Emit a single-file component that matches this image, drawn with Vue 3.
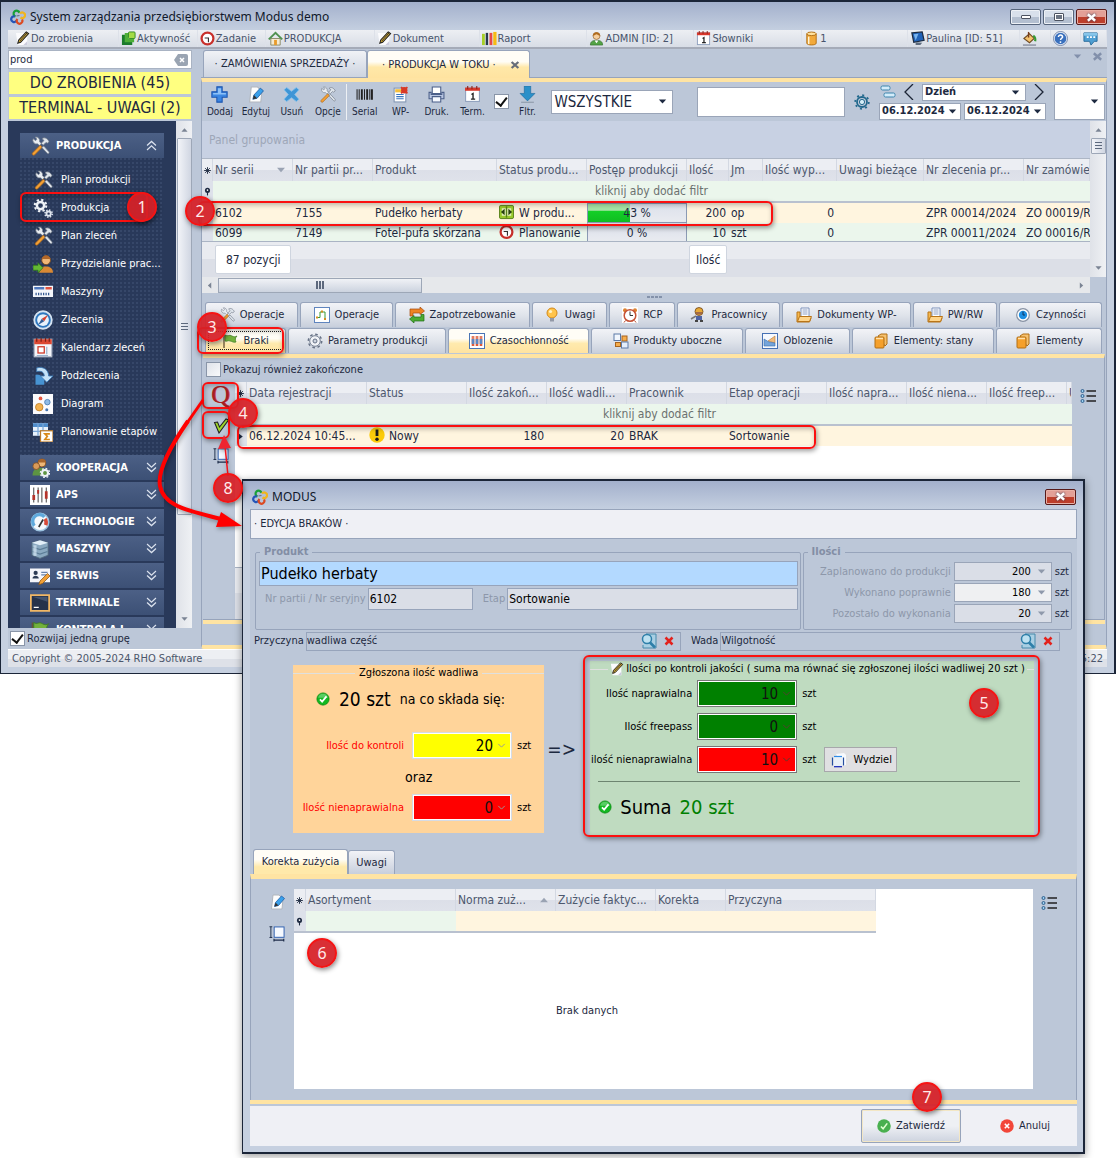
<script setup>
const tools = '<path d="M2.5 2.2a3 3 0 0 0 3.6 4l1.4 1.4 1.6-1.6-1.5-1.4A3 3 0 0 0 4.300.8l1.2 1.700-1 1.200z" fill="#e9edf2" stroke="#7d8794" stroke-width=".6"/><path d="M2 13.500 8.200 7.300l1.600 1.600-6.200 6.200c-1 .8-2.500-.6-1.600-1.600z" fill="#f3a034" stroke="#a8641a" stroke-width=".6"/><path d="M9 5.800 11.200 3.600 9.600 2.100C11.500.7 14 1.800 15.300 4.600l-1.500 1.200-1-.7-2.200 2.200z" fill="#dfe5ec" stroke="#6d7683" stroke-width=".6"/><path d="M9.400 9.200l4.300 4.600c.8 1 2.200-.2 1.400-1.300L11 8z" fill="#dfe5ec" stroke="#6d7683" stroke-width=".6"/>'
const check = '<circle cx="8" cy="8" r="7" fill="#12b821" stroke="#07850f" stroke-width=".8"/><path d="M2.500 6.500a5.600 5.600 0 0 1 11 0z" fill="#fff" opacity=".3"/><path d="M4.500 8.500 7 11l5-6" fill="none" stroke="#fff" stroke-width="2"/>'
const icons = {
  logo: '<g fill="none" stroke-width="2.200"><path d="M5.500 7.500a3 3 0 1 1 4-3.500" stroke="#18a038"/><path d="M10 4.500a2.800 2.800 0 1 1 .5 4" stroke="#f0b51e"/><path d="M5 7.500a2.800 2.800 0 1 0 1.500 4" stroke="#2455b8"/><path d="M7.500 10a2.800 2.800 0 1 0 4.500.5" stroke="#dc4a22"/><path d="M6.500 7 9.500 6.500" stroke="#66707f" stroke-width="1.200"/></g>',
  pencil: '<path d="M1 2h12v13H3z" fill="#fbfbfd"/><path d="M9 15l4-4v4z" fill="#ccd"/><path d="M3 13l1-3.500L12 1l2.500 1.800L6 12z" fill="#f2c33a" stroke="#1c1c1c" stroke-width="1.100"/><path d="M4.800 11 13 2" stroke="#1c1c1c" stroke-width="1"/>',
  green3: '<path d="M1 4h4v7h7v4H1z" fill="#1b7b2c"/><path d="M4 2h4v6h6v4H4z" fill="#4daf38"/><rect x="8" y="1" width="7" height="7" rx="1" fill="#a4db46" stroke="#348b25"/>',
  clock: '<circle cx="8" cy="8" r="6.300" fill="#fff" stroke="#c8302b" stroke-width="2.400"/><path d="M5 7.500h4V12" fill="none" stroke="#333" stroke-width="1.200"/>',
  home: '<path d="M3 8h10v7H3z" fill="#f4ead1" stroke="#8a8a6a"/><path d="M.8 9 8 2l7.200 7" fill="none" stroke="#4f9150" stroke-width="2"/><path d="M6.500 9.500h3V15h-3z" fill="#e89b2a"/>',
  chart: '<rect x="0" y="3" width="3" height="12" fill="#a6cf27"/><rect x="4" y="2" width="2.500" height="13" fill="#263a4d"/><rect x="8" y="2" width="3" height="13" fill="#e64848"/><rect x="12" y="1" width="3.500" height="14" fill="#f6bb13"/>',
  user: '<path d="M1.500 15c0-4 2.500-5 6.500-5s6.500 1 6.500 5z" fill="#53a345" stroke="#2f6d28" stroke-width=".7"/><path d="m6 10 2 3 2-3z" fill="#fff"/><circle cx="8" cy="5.300" r="3.700" fill="#f6cf9e" stroke="#8c5a24" stroke-width=".7"/><path d="M4 5c0-5 8-5 8 0-2 0-3-1.500-4-1.500S6 5 4 5z" fill="#b06c1f"/>',
  cal1: '<rect x="1.500" y="2" width="13" height="12.500" fill="#fff" stroke="#8fa0bd"/><path d="M1 1.500h14v3H1z" fill="#d8372b"/><path d="M3.500 0v3M7.500 0v3M12 0v3" stroke="#8b2018"/><path d="M7 8l1.500-1v5M6.500 12.300h4" stroke="#222" fill="none" stroke-width="1.300"/>',
  db: '<path d="M3 3v10c0 2.500 10 2.500 10 0V3z" fill="#f2a93a" stroke="#b06d13"/><ellipse cx="8" cy="3" rx="5" ry="1.900" fill="#ffe2a0" stroke="#b06d13"/><path d="M5 6v8" stroke="#fff4d4" stroke-width="1.600"/>',
  monitor: '<path d="M2 2l11-1 2 9-11 2z" fill="#2163b8" stroke="#1c2b40" stroke-width="1.300"/><path d="M4 3.500 9 3 6 10z" fill="#79b5ef"/><path d="M6 12l7 .5L11 15H6z" fill="#5d6b7d"/>',
  bucket: '<path d="m2 8 6-5 5 5-5 4.500z" fill="#f5c26d" stroke="#6f4b24" stroke-width="1.100"/><path d="M7 1v6" stroke="#753b1c" stroke-width="1.500"/><path d="M12 5c2 1 2.500 4 2 6" stroke="#379b34" stroke-width="2.400" fill="none"/><path d="M1 15h14" stroke="#8a8fa0" stroke-width="1.500"/>',
  help: '<circle cx="8" cy="8" r="6.800" fill="#3a70bd" stroke="#e5edf8" stroke-width="1.200"/><circle cx="8" cy="8" r="7.500" fill="none" stroke="#5d7199" stroke-width=".8"/><path d="M5.800 6.500c0-3 4.700-2.800 4.400 0-.2 1.200-2.100 1.400-2.100 3" fill="none" stroke="#fff" stroke-width="1.600"/><circle cx="8" cy="11.800" r="1" fill="#fff"/>',
  chat: '<path d="M1 2h14v9h-3l-3.500 4L7 11H1z" fill="#4f9fd3" stroke="#286b9b"/><path d="M1 2h14v3H1z" fill="#87c5ea"/><path d="M4 6.500h2M7.500 6.500h2M11 6.500h2" stroke="#fff" stroke-width="1.800"/>',
  plus: '<path d="M5.500.8h5v4.700h4.700v5h-4.700v4.700h-5v-4.700H.8v-5h4.700z" fill="#3b86e2" stroke="#1e57b0"/><path d="M6.500 2h3v4.500H14V8H2V6.500h4.500z" fill="#8dc1f7"/>',
  edit: '<path d="M4 1h6l4 4-1 10H2.500z" fill="#fdfdfd" stroke="#b1b6bd"/><path d="m5.500 12.500 1-4 6-6.500L15.500 4.500l-6 7z" fill="#3aa0ea" stroke="#1e5ea8" stroke-width=".8"/><path d="m5.500 12.500 1-4L9.500 11.500z" fill="#333"/>',
  del: '<path d="M1 3.500 3.500 1.500 8 5l4.500-3.500L15 3.500 11 8l4 4.500-2.500 2L8 11l-4.500 3.500L1 12.500 5 8z" fill="#3e95d6" stroke="#83c2ec" stroke-width=".8"/>',
  tools,
  barcode: '<path d="M1 3v10M3 3v10M8 3v10M13 3v10" stroke="#222" stroke-width="1"/><path d="M5.500 3v10M10.500 3v10M15 3v10" stroke="#222" stroke-width="1.800"/>',
  wp: '<rect x="2" y="2" width="11" height="13" fill="#fff" stroke="#8396b3"/><path d="M3 3h6v3H3z" fill="#f5be3b"/><path d="M4 8h7M4 10h7M4 12h7" stroke="#3976c0"/><circle cx="11.500" cy="4" r="3" fill="#d83a26"/><path d="M8.500 1l6 6m0-6-6 6" stroke="#d83a26" stroke-width="1.600"/>',
  print: '<path d="M4 1h8v6H4z" fill="#fff" stroke="#4b5f89"/><path d="M1 6h2v2h10V6h2v6H1z" fill="#b8c5e2" stroke="#4b5f89"/><path d="M4 10h8v5H4z" fill="#f5f8ff" stroke="#4b5f89"/>',
  down: '<path d="M5 0h6v7h4l-7 7-7-7h4z" fill="#2a90c9" stroke="#1b6a9e" stroke-width=".6"/><path d="M2 15.300h12" stroke="#8c98a8"/>',
  gear: '<circle cx="8" cy="8" r="5" fill="none" stroke="#23698d" stroke-width="1.800"/><circle cx="8" cy="8" r="2.600" fill="#d5eef8" stroke="#23698d"/><circle cx="8" cy="8" r="6.800" fill="none" stroke="#23698d" stroke-width="1.800" stroke-dasharray="2 3.340"/>',
  bars: '<rect x="1" y="2" width="9" height="4" rx="1.500" fill="#d4ecfa" stroke="#3d85ad"/><rect x="4" y="9" width="11" height="4" rx="1.500" fill="#d4ecfa" stroke="#3d85ad"/>',
  gears: '<circle cx="6" cy="6" r="2.900" fill="none" stroke="#eef2f7" stroke-width="2"/><circle cx="6" cy="6" r="4.600" fill="none" stroke="#eef2f7" stroke-width="1.700" stroke-dasharray="1.800 1.810"/><circle cx="12.500" cy="12.500" r="1.700" fill="none" stroke="#dfe5ee" stroke-width="1.500"/><circle cx="12.500" cy="12.500" r="2.900" fill="none" stroke="#dfe5ee" stroke-width="1.200" stroke-dasharray="1.200 1.070"/>',
  worker: '<path d="M5 15c0-4 2-5 5.500-5S16 12 16 15z" fill="#d98934"/><circle cx="10.500" cy="5" r="3.500" fill="#f0b777" stroke="#7a481c" stroke-width=".7"/><path d="M7 4c1-4 6-4 7 0z" fill="#b2682a"/><path d="M0 9h4V7l4 4-4 4v-2H0z" fill="#64b834" stroke="#2b721b" stroke-width=".6"/>',
  machine: '<rect y="3" width="16" height="9" fill="#f4f6fa"/><path d="M1 5h8" stroke="#4f78bd" stroke-width="2"/><path d="M10 5h5" stroke="#e0533f" stroke-width="2"/><path d="M2 9.500h12" stroke="#33578f" stroke-width="2" stroke-dasharray="1 1"/>',
  compass: '<circle cx="8" cy="8" r="7" fill="#2f78bf" stroke="#d6e4f2" stroke-width="1.500"/><circle cx="8" cy="8" r="4.700" fill="#e8f2fb"/><path d="M12 4 9 9 7 7z" fill="#d9402e"/><path d="M4 12l3-5 2 2z" fill="#355f96"/>',
  calendar: '<rect x="1" y="1" width="14" height="14" fill="#f5f6fa" stroke="#b4bccb"/><path d="M1 1h14v4H1z" fill="#dc4732"/><path d="M3 0v3M6.500 0v3M10 0v3M13 0v3" stroke="#7c2018"/><rect x="4" y="7" width="5" height="5" fill="#fff" stroke="#cf3323"/><path d="M11 7v6M3 14h9" stroke="#9bb3cf"/>',
  sub: '<path d="M2 7h3l4 3v5H2z" fill="#4793d2"/><path d="M3 1.500c6-1.500 9.500 2 9.500 6.500H16l-5 5-5-5h3c0-3-2.500-4.500-6-3.500z" fill="#c4e2f8" stroke="#3a78b3" stroke-width=".7"/>',
  diagram: '<rect width="16" height="16" fill="#fbfbfd"/><circle cx="5" cy="10.500" r="3" fill="#f3b250" stroke="#b9771b" stroke-width=".6"/><circle cx="11.500" cy="6.500" r="2.200" fill="#8fbbe6" stroke="#3f73ad" stroke-width=".6"/><circle cx="6" cy="3.500" r="1.500" fill="#e55a43"/><circle cx="11" cy="12.500" r="1.200" fill="#4876b1"/>',
  planning: '<path d="M0 1h12v10H0z" fill="#e9f2fc"/><path d="M0 1h12v3H0z" fill="#4f8dcc"/><path d="M0 7.500h12M4 1v10M8 1v10" stroke="#7aa7d7"/><rect x="6" y="7" width="10" height="9" fill="#fff" stroke="#b87a2c"/><path d="M13.500 9.500h-4l2 2-2 2.500h4" fill="none" stroke="#d98918" stroke-width="1.300"/>',
  coop: '<path d="M2 14c0-5 3-6 7-6s5 2 5 6z" fill="#5d9442"/><circle cx="9.500" cy="4" r="3.200" fill="#efb878" stroke="#7a481c" stroke-width=".7"/><path d="M6.300 3.500c1-4 5.500-4 6.500 0z" fill="#a9662c"/><circle cx="5" cy="6.500" r="2.700" fill="#d99a58" stroke="#7a481c" stroke-width=".6"/><circle cx="12" cy="12" r="2.400" fill="none" stroke="#eef2f7" stroke-width="1.700"/><circle cx="12" cy="12" r="3.700" fill="none" stroke="#eef2f7" stroke-width="1" stroke-dasharray="1.400 1.500"/>',
  sliders: '<rect width="16" height="16" fill="#fff"/><path d="M3 2v12M6.500 2v12M9.500 2v12M13 2v12" stroke="#444" stroke-width=".8"/><path d="M3 8v4M13 5v6" stroke="#b5332a" stroke-width="2.200"/><path d="M6.500 4v3" stroke="#b5332a" stroke-width="1.600"/>',
  gauge: '<circle cx="8" cy="8" r="7" fill="#f4f8fc" stroke="#9cc3e0" stroke-width="1.200"/><path d="M3.500 11A5.300 5.300 0 0 1 11.500 4" fill="none" stroke="#5fa9dc" stroke-width="2.600"/><path d="M12 5.500a5 5 0 0 1 .5 5" fill="none" stroke="#d74a38" stroke-width="2.800"/><path d="m7 12 3.500-6" stroke="#333" stroke-width="1.300"/>',
  servers: '<path d="M1.500 3 8 1l6.500 2v10L8 15.500 1.500 13z" fill="#8aa9c0" stroke="#50677c" stroke-width=".7"/><path d="M1.500 3 8 5l6.500-2L8 1z" fill="#e2eff8"/><path d="M2 6.500 8 8.500l6-2M2 10l6 2 6-2" stroke="#5c7d96" fill="none"/><path d="M4 5v8.500" stroke="#d5e7f4" stroke-width="2.500" opacity=".7"/>',
  service: '<rect y="2" width="16" height="11" fill="#f5f6fa"/><circle cx="4.500" cy="5.500" r="1.700" fill="#2d3c55"/><path d="M2 10c0-3 5-3 5 0z" fill="#2d3c55"/><path d="M9 5h5M9 7h4" stroke="#6782ab"/><path d="M7 15l1-3 6-6 2 2-6 6z" fill="#f2a035" stroke="#8b5516" stroke-width=".6"/>',
  terminal: '<rect x=".7" y="1.700" width="14.600" height="12.600" fill="#26324a" stroke="#f1b765" stroke-width="1.400"/><path d="M3 11.500h4" stroke="#fff"/><path d="M2 3h12v4z" fill="#44546f"/>',
  flag: '<path d="M2 2v13" stroke="#665337" stroke-width="1.300"/><path d="M3 2c3 2 4-1 7 1 2 1 3 1 5 0-2 2-2 4-1 6-3 1-4-1-6-1-2-1-3 1-5 0z" fill="#72b13c" stroke="#3d7a22" stroke-width=".7"/>',
  flow: '<rect x=".5" y=".5" width="15" height="15" fill="#fff" stroke="#5f84be"/><path d="M3 10.500h3V5h5v7" fill="none" stroke="#3a9a35"/><path d="M2 10.500h2M7 4.500h2M10 12h2" stroke="#d58d22" stroke-width="2"/>',
  swap: '<path d="M1 2h10V0l4.500 4L11 7.500V6H4v3H1z" fill="#ee8424" stroke="#a5490d" stroke-width=".7"/><path d="M15 14H5v2L.5 12 5 8.500V10h7V7.500h3z" fill="#4cab32" stroke="#1d6d16" stroke-width=".7"/>',
  bulb: '<circle cx="8" cy="6" r="5" fill="#ffc44c" stroke="#d38918"/><path d="M6 11h4v3.500H6z" fill="#9299a7"/><circle cx="6.500" cy="4.500" r="1.600" fill="#fff3c6"/>',
  alarm: '<rect width="16" height="16" fill="#fff"/><circle cx="3" cy="3.300" r="2" fill="#dc8130"/><circle cx="13" cy="3.300" r="2" fill="#dc8130"/><circle cx="8" cy="8.500" r="5.800" fill="#fff" stroke="#c65236" stroke-width="1.500"/><path d="M8 4.500v4h3" stroke="#333" fill="none"/><path d="M3.500 13.500 2 15.500M12.500 13.500l1.500 2" stroke="#b54a2e"/>',
  person: '<path d="M6 9h6v4H6z" fill="#4e63a5"/><circle cx="9" cy="4.500" r="4" fill="#e8aa37" stroke="#6c431b" stroke-width=".8"/><path d="M6 5h6v2.500H6z" fill="#a36a45"/><path d="M5 13h3v2H5zM10 13h3v2h-3z" fill="#444"/><path d="M6 9 1 12" stroke="#777" stroke-width="1.500"/>',
  folder: '<path d="M5 1h8v9H5z" fill="#fff" stroke="#7f93bc"/><path d="M6.500 3h5M6.500 5h5M6.500 7h5" stroke="#8d9fc4"/><path d="M1 5h3v6h11l-1.500 4H1z" fill="#f6b84e" stroke="#b87417"/><path d="M3.500 9.500h12l-2 5H1.500z" fill="#ffd58b" stroke="#b87417"/>',
  dial: '<circle cx="8" cy="8" r="6.300" fill="#fff" stroke="#8792a4" stroke-width="1.200"/><circle cx="8" cy="8" r="4.200" fill="#1c8fe3"/><path d="M8 4.500V8h2" stroke="#0b3461" fill="none"/>',
  cog: '<circle cx="8" cy="8" r="6.700" fill="none" stroke="#677286" stroke-width="1.500" stroke-dasharray="2.600 2.660"/><circle cx="8" cy="8" r="5.300" fill="#f1f3f7" stroke="#677286" stroke-width=".9"/><circle cx="8" cy="8" r="2" fill="#cdd4df" stroke="#677286"/>',
  tubes: '<rect x=".5" y=".5" width="15" height="15" fill="#fff" stroke="#4a75b5"/><path d="M4 3v10M8 3v10M12 3v10" stroke="#dd5a3b" stroke-width="2.600"/><path d="M4 6v5M8 6v5M12 6v5" stroke="#5a89c4" stroke-width="2.600"/><path d="M4 3v3M8 3v3M12 3v3" stroke="#e9a082" stroke-width="1"/>',
  blocks: '<rect x="1" y="1" width="6.500" height="6.500" fill="#f1f6fd" stroke="#5c7aa8"/><rect x="9" y="3" width="5" height="5" fill="#f6ad4b" stroke="#a8631c"/><rect x="2.500" y="9.500" width="5" height="4" fill="#f6ad4b" stroke="#a8631c"/><rect x="8.500" y="9" width="6.500" height="6" fill="#e5eefb" stroke="#5c7aa8"/>',
  area: '<rect x=".5" y=".5" width="15" height="15" fill="#f6f9fe" stroke="#4671b5"/><path d="M6 8l7-5v7z" fill="#f0bb7d" stroke="#b97a36" stroke-width=".6"/><path d="M2 6l5 3 6 1v3H2z" fill="#74a4da" stroke="#3a6cab" stroke-width=".6"/>',
  boxes: '<path d="M5 3 8 1h6v10l-2 2z" fill="#f6c16e" stroke="#b16e15"/><rect x="2" y="4" width="9" height="11" rx="1" fill="#f5a02b" stroke="#b16e15"/><path d="M3 5.500h7" stroke="#ffe3b0" stroke-width="1.500"/>',
  work: '<rect x=".5" y="1" width="15" height="14" rx="1.500" fill="#98c92c" stroke="#568018"/><path d="M3 4h10v8H3z" fill="#e4f2b8"/><path d="M2 8l4-3.500v7zM14 8l-4-3.500v7z" fill="#27410f"/><path d="M8 2v12" stroke="#568018" stroke-width="1.500"/>',
  warn: '<circle cx="8" cy="8" r="7.700" fill="#fccb0a"/><path d="M8 2.500v6.500" stroke="#1b1b1b" stroke-width="2.800"/><circle cx="8" cy="12.200" r="1.700" fill="#1b1b1b"/>',
  tick: '<path d="M1.500 4.500 4.500 4l2 5L13 1l2.500 1L6 15z" fill="#9fd62a" stroke="#222" stroke-width="1.100"/>',
  layout: '<path d="M1.500 1v11M0 .8h3M0 12.200h3" stroke="#1c2b48" stroke-width="1"/><path d="M5 15h10M4.800 13.500v3M15.200 13.500v3" stroke="#1c2b48" stroke-width="1.200"/><rect x="5" y="1" width="10.500" height="11" fill="#f5f9ff" stroke="#2c5eae"/>',
  list: '<g fill="#9bd0f0" stroke="#2e5e8d"><circle cx="2.500" cy="3" r="1.500"/><circle cx="2.500" cy="8" r="1.500"/><circle cx="2.500" cy="13" r="1.500"/></g><path d="M6.500 3H16M6.500 8H16M6.500 13H16" stroke="#222" stroke-width="1.300"/>',
  lens: '<path d="M5 1h10v14H2v-3" fill="#a9cfe3" stroke="#4789aa"/><circle cx="6" cy="6" r="4.500" fill="#bde1f1" stroke="#2e7fa9" stroke-width="1.500"/><path d="m9 9.500 5 5" stroke="#2e7fa9" stroke-width="2.600"/>',
  x: '<path d="m4.500 4.500 7 7M11.500 4.500l-7 7" stroke="#e3211c" stroke-width="2.500"/>',
  check,
  ok: '<circle cx="8" cy="8" r="7.700" fill="#49b04f"/><path d="m4.500 8.500 2.500 2.700L11.700 5" fill="none" stroke="#e1ffd1" stroke-width="1.800"/>',
  no: '<circle cx="8" cy="8" r="7.700" fill="#f24639"/><path d="m5.500 5.500 5 5m0-5-5 5" stroke="#fff" stroke-width="1.800"/>',
  cut: '<path d="M5 2l8-1 2 2v10l-3 1z" fill="#f8fafd"/><path d="M2.500 5H11.500V14H2.500z" fill="#e8f0f8"/><path d="M3 4.500h8" stroke="#2f8be8" stroke-width="1.200"/><path d="M1.500 5.500v8M12.500 5.500v8" stroke="#254e9e" stroke-width="1.200"/><path d="M3 14.700h8" stroke="#1023b8" stroke-width="1.200"/>',
  arrow: '<path d="M3.500 5.500h9L8 10.500z" fill="currentColor"/>',
  chev: '<path d="m4 6 4 4 4-4" fill="none" stroke="currentColor" stroke-width="1.200"/>',
  dbl: '<path d="m2.500 2.500 5.500 5 5.500-5M2.500 8 8 13l5.500-5" fill="none" stroke="currentColor" stroke-width="1.500"/>',
  dblUp: '<path d="m2.500 8 5.500-5 5.500 5M2.500 13.500 8 8.500l5.500 5" fill="none" stroke="currentColor" stroke-width="1.500"/>',
  cross: '<path d="m3.500 4 9 8m0-8-9 8" stroke="currentColor" stroke-width="3"/>',
  star: '<path d="M8 2v12M2 8h12M3.800 3.800l8.400 8.400M12.200 3.800 3.800 12.200" stroke="#1d2940" stroke-width="1.600"/>',
  pin: '<circle cx="8" cy="6" r="4.500" fill="#1d2940"/><circle cx="8" cy="5.500" r="1.500" fill="#fff"/><path d="M8 9v6" stroke="#1d2940" stroke-width="2"/>',
}

const menu = [
  { t: 'Do zrobienia', i: 'pencil', w: 106 }, { t: 'Aktywność', i: 'green3', w: 79 },
  { t: 'Zadanie', i: 'clock', w: 68 }, { t: 'PRODUKCJA', i: 'home', w: 109 },
  { t: 'Dokument', i: 'pencil', w: 105 }, { t: 'Raport', i: 'chart', w: 108 },
  { t: 'ADMIN [ID: 2]', i: 'user', w: 107 }, { t: 'Słowniki', i: 'cal1', w: 108 },
  { t: '1', i: 'db', w: 106 }, { t: 'Paulina [ID: 51]', i: 'monitor', w: 112 },
  { t: '', i: 'bucket', w: 31 }, { t: '', i: 'help', w: 30 }, { t: '', i: 'chat', w: 26 },
]
const navItems = [
  ['Plan produkcji', 'tools'], ['Produkcja', 'gears'], ['Plan zleceń', 'tools'],
  ['Przydzielanie prac...', 'worker'], ['Maszyny', 'machine'], ['Zlecenia', 'compass'],
  ['Kalendarz zleceń', 'calendar'], ['Podzlecenia', 'sub'], ['Diagram', 'diagram'], ['Planowanie etapów', 'planning'],
]
const groups = [
  ['KOOPERACJA', 'coop'], ['APS', 'sliders'], ['TECHNOLOGIE', 'gauge'], ['MASZYNY', 'servers'],
  ['SERWIS', 'service'], ['TERMINALE', 'terminal'], ['KONTROLA J.', 'flag'],
]
const toolsA = [['Dodaj', 'plus'], ['Edytuj', 'edit'], ['Usuń', 'del'], ['Opcje', 'tools']]
const toolsB = [['Serial', 'barcode'], ['WP-', 'wp'], ['Druk.', 'print'], ['Term.', 'cal1']]
const cols1 = [
  ['Nr serii', 80], ['Nr partii pr...', 80], ['Produkt', 124], ['Status produ...', 90], ['Postęp produkcji', 100],
  ['Ilość', 42], ['Jm', 34], ['Ilość wyp...', 74], ['Uwagi bieżące', 87], ['Nr zlecenia pr...', 100],
]
const rows1 = [
  { a: '6102', b: '7155', c: 'Pudełko herbaty', s: 'W produ...', i: 'work', p: 43, q: 200, u: 'op', z: 'ZPR 00014/2024', o: 'ZO 00019/R' },
  { a: '6099', b: '7149', c: 'Fotel-pufa skórzana', s: 'Planowanie', i: 'clock', p: 0, q: 10, u: 'szt', z: 'ZPR 00011/2024', o: 'ZO 00016/R' },
]
const tabs1 = [
  ['Operacje', 'tools', 94], ['Operacje', 'flow', 93], ['Zapotrzebowanie', 'swap', 137], ['Uwagi', 'bulb', 76], ['RCP', 'alarm', 66],
  ['Pracownicy', 'person', 104], ['Dokumenty WP-', 'folder', 130], ['PW/RW', 'folder', 85], ['Czynności', 'dial', 104],
]
const tabs2 = [
  ['Braki', 'flag', 81, true], ['Parametry produkcji', 'cog', 159], ['Czasochłonność', 'tubes', 142, true], ['Produkty uboczne', 'blocks', 153],
  ['Oblozenie', 'area', 105], ['Elementy: stany', 'boxes', 143], ['Elementy', 'boxes', 106],
]
const cols2 = [
  ['Data rejestracji', 120], ['Status', 100], ['Ilość zakoń...', 80], ['Ilość wadli...', 80], ['Pracownik', 100],
  ['Etap operacji', 100], ['Ilość napra...', 80], ['Ilość niena...', 80], ['Ilość freep...', 80],
]
const amounts = [['Zaplanowano do produkcji', 200], ['Wykonano poprawnie', 180], ['Pozostało do wykonania', 20]]
const afterCheck = [['Ilość naprawialna', 10, 'green'], ['Ilość freepass', 0, 'green'], ['ilość nienaprawialna', 10, 'red']]
const frames = ['nav', 'row', 'braki', 'quality', 'approve', 'defect', 'control']
</script>

<template>
  <div class="page">
    <main class="window">
      <header class="titlebar">
        <svg class="ic16" viewBox="0 0 16 16" v-html="icons.logo" />
        <span>System zarządzania przedsiębiorstwem Modus demo</span>
        <div class="winbtns">
          <button class="winbtn" aria-label="Minimalizuj"><i class="min"></i></button>
          <button class="winbtn" aria-label="Maksymalizuj"><i class="max"></i></button>
          <button class="winbtn close" aria-label="Zamknij"><svg viewBox="0 0 16 16" v-html="icons.cross" /></button>
        </div>
      </header>

      <nav class="menubar">
        <button v-for="(m, k) in menu" :key="k" :style="{ flexBasis: m.w + 'px' }" :aria-label="m.t || m.i">
          <svg class="ic15" viewBox="0 0 16 16" v-html="icons[m.i]" />{{ m.t }}
        </button>
      </nav>

      <div class="workspace">
        <aside class="side">
          <div class="search">
            <input type="text" value="prod" aria-label="Szukaj">
            <svg viewBox="0 0 14 12"><path d="M4 0h8a2 2 0 0 1 2 2v8a2 2 0 0 1-2 2H4L0 6z" fill="#9aa4b2" /><path d="m6 4 4 4m0-4L6 8" stroke="#fff" stroke-width="1.500" /></svg>
          </div>
          <button class="notice">DO ZROBIENIA (45)</button>
          <button class="notice">TERMINAL - UWAGI (2)</button>
          <div class="navwrap">
            <div class="nav">
              <button class="ghead"><svg class="ic20" viewBox="0 0 16 16" v-html="icons.tools" />PRODUKCJA<svg class="gchev" viewBox="0 0 16 16" v-html="icons.dblUp" /></button>
              <div class="items">
                <a v-for="n in navItems" :key="n[0]" href="#"><svg class="ic20" viewBox="0 0 16 16" v-html="icons[n[1]]" />{{ n[0] }}</a>
              </div>
              <button v-for="g in groups" :key="g[0]" class="ghead"><svg class="ic20" viewBox="0 0 16 16" v-html="icons[g[1]]" />{{ g[0] }}<svg class="gchev" viewBox="0 0 16 16" v-html="icons.dbl" /></button>
            </div>
            <div class="vscroll"><svg class="up" viewBox="0 0 16 16" v-html="icons.arrow" /><div class="vthumb long"><i></i></div><svg viewBox="0 0 16 16" v-html="icons.arrow" /></div>
          </div>
          <label class="tickrow"><input type="checkbox" checked> Rozwijaj jedną grupę</label>
        </aside>

        <section class="main">
          <div class="doctabs">
            <button class="doctab">· ZAMÓWIENIA SPRZEDAŻY ·</button>
            <button class="doctab active">· PRODUKCJA W TOKU ·<svg viewBox="0 0 16 16" v-html="icons.cross" /></button>
            <div class="tabctl"><svg viewBox="0 0 16 16" v-html="icons.arrow" /><svg viewBox="0 0 16 16" v-html="icons.cross" /></div>
          </div>
          <div class="pane">
            <div class="toolbar">
              <button v-for="t in toolsA" :key="t[0]" class="tool"><svg viewBox="0 0 16 16" v-html="icons[t[1]]" />{{ t[0] }}</button>
              <span class="vsep"></span>
              <button v-for="t in toolsB" :key="t[0]" class="tool"><svg viewBox="0 0 16 16" v-html="icons[t[1]]" />{{ t[0] }}</button>
              <input type="checkbox" checked aria-label="Filtruj">
              <button class="tool"><svg viewBox="0 0 16 16" v-html="icons.down" />Fltr.</button>
              <div class="combo all"><select aria-label="Zakres"><option>WSZYSTKIE</option></select><svg viewBox="0 0 16 16" v-html="icons.arrow" /></div>
              <input class="find" type="text" aria-label="Znajdź">
              <button class="plain gearbtn" aria-label="Ustawienia"><svg class="ic16" viewBox="0 0 16 16" v-html="icons.gear" /></button>
              <div class="period">
                <div class="prow">
                  <svg class="ic16" viewBox="0 0 16 16" v-html="icons.bars" />
                  <button class="plain" aria-label="Poprzedni"><svg viewBox="0 0 10 16"><path d="M9 0 1 8l8 8" fill="none" stroke="#1c2536" stroke-width="1.300" /></svg></button>
                  <div class="combo day"><select aria-label="Okres"><option>Dzień</option></select><svg viewBox="0 0 16 16" v-html="icons.arrow" /></div>
                  <button class="plain" aria-label="Następny"><svg viewBox="0 0 10 16"><path d="m1 0 8 8-8 8" fill="none" stroke="#1c2536" stroke-width="1.300" /></svg></button>
                </div>
                <div class="prow">
                  <div class="combo date"><input type="text" value="06.12.2024" aria-label="Od"><svg viewBox="0 0 16 16" v-html="icons.arrow" /></div>
                  <div class="combo date"><input type="text" value="06.12.2024" aria-label="Do"><svg viewBox="0 0 16 16" v-html="icons.arrow" /></div>
                </div>
              </div>
              <div class="combo view"><select aria-label="Widok"><option></option></select><svg viewBox="0 0 16 16" v-html="icons.arrow" /></div>
            </div>

            <div class="gridwrap">
              <div class="gridcol">
                <div class="grouping">Panel grupowania</div>
                <div class="clip">
                  <table class="grid">
                    <colgroup><col class="cind"><col v-for="c in cols1" :key="c[0]" :style="{ width: c[1] + 'px' }"><col></colgroup>
                    <thead>
                      <tr><th><svg class="ind" viewBox="0 0 16 16" v-html="icons.star" /></th><th v-for="c in cols1" :key="c[0]">{{ c[0] }}<svg v-if="c[0] === 'Nr serii'" class="sort" viewBox="0 0 16 16" v-html="icons.arrow" /></th><th>Nr zamówień</th></tr>
                    </thead>
                    <tbody>
                      <tr class="filter"><td><svg class="ind" viewBox="0 0 16 16" v-html="icons.pin" /></td><td colspan="11">kliknij aby dodać filtr</td></tr>
                      <tr v-for="(r, k) in rows1" :key="r.a" :class="k ? 'alt' : 'sel'">
                        <td></td><td>{{ r.a }}</td><td>{{ r.b }}</td><td>{{ r.c }}</td>
                        <td><svg class="ic16 st" viewBox="0 0 16 16" v-html="icons[r.i]" />{{ r.s }}</td>
                        <td class="pcell"><div class="prog"><i :style="{ width: r.p + '%' }"></i><span>{{ r.p }} %</span></div></td>
                        <td class="num">{{ r.q }}</td><td>{{ r.u }}</td><td class="num">0</td><td></td><td>{{ r.z }}</td><td>{{ r.o }}</td>
                      </tr>
                    </tbody>
                  </table>
                </div>
                <div class="sums"><span class="sum">87 pozycji</span><span class="sum qty">Ilość</span></div>
                <div class="hscroll"><svg class="left" viewBox="0 0 16 16" v-html="icons.arrow" /><div class="hthumb"><i></i></div><svg class="right" viewBox="0 0 16 16" v-html="icons.arrow" /></div>
              </div>
              <div class="vscroll short"><svg class="up" viewBox="0 0 16 16" v-html="icons.arrow" /><div class="vthumb"><i></i></div><svg viewBox="0 0 16 16" v-html="icons.arrow" /></div>
            </div>
            <div class="dots"></div>

            <div class="tabrow"><button v-for="(t, k) in tabs1" :key="k" :style="{ flexGrow: t[2] }"><svg class="ic16" viewBox="0 0 16 16" v-html="icons[t[1]]" />{{ t[0] }}</button></div>
            <div class="tabrow"><button v-for="(t, k) in tabs2" :key="k" :class="{ on: t[3], focus: !k }" :style="{ flexGrow: t[2] }"><svg class="ic16" viewBox="0 0 16 16" v-html="icons[t[1]]" />{{ t[0] }}</button></div>

            <div class="detail">
              <label class="tickrow"><input type="checkbox"> Pokazuj również zakończone</label>
              <div class="drow">
                <div class="dtools">
                  <button class="qbtn">Q</button>
                  <button class="plain" aria-label="Zatwierdź"><svg class="ic16" viewBox="0 0 16 16" v-html="icons.tick" /></button>
                  <button class="plain" aria-label="Układ"><svg class="ic16" viewBox="0 0 16 17" v-html="icons.layout" /></button>
                </div>
                <div class="dgrid">
                  <table class="grid">
                    <colgroup><col class="cind"><col v-for="c in cols2" :key="c[0]" :style="{ width: c[1] + 'px' }"><col></colgroup>
                    <thead><tr><th><svg class="ind" viewBox="0 0 16 16" v-html="icons.star" /></th><th v-for="c in cols2" :key="c[0]">{{ c[0] }}</th><th>U</th></tr></thead>
                    <tbody>
                      <tr class="filter"><td></td><td colspan="10">kliknij aby dodać filtr</td></tr>
                      <tr class="sel"><td><svg class="ind" viewBox="0 0 16 16"><path d="m4 2 8 6-8 6z" fill="#1d2940" /></svg></td><td>06.12.2024 10:45...</td><td><svg class="ic16 st2" viewBox="0 0 16 16" v-html="icons.warn" />Nowy</td><td class="num">180</td><td class="num">20</td><td>BRAK</td><td>Sortowanie</td><td></td><td></td><td></td><td></td></tr>
                    </tbody>
                  </table>
                  <div class="sums low"></div>
                </div>
                <svg class="ic16 listic" viewBox="0 0 16 16" v-html="icons.list" />
              </div>
            </div>
          </div>
        </section>
      </div>
      <footer class="status"><span>Copyright © 2005-2024 RHO Software</span><span>15:22</span></footer>
    </main>

    <section class="dialog" role="dialog" aria-label="MODUS">
      <header class="titlebar">
        <svg class="ic16" viewBox="0 0 16 16" v-html="icons.logo" /><span>MODUS</span>
        <div class="winbtns"><button class="winbtn close" aria-label="Zamknij"><svg viewBox="0 0 16 16" v-html="icons.cross" /></button></div>
      </header>
      <div class="dbody">
        <h1>· EDYCJA BRAKÓW ·</h1>
        <div class="sets">
          <fieldset class="prod">
            <legend>Produkt</legend>
            <input class="name" type="text" value="Pudełko herbaty" aria-label="Produkt">
            <div class="line">
              <label for="serial">Nr partii / Nr seryjny</label><input id="serial" class="serial" type="text" value="6102">
              <label for="stage">Etap</label><input id="stage" class="stage" type="text" value="Sortowanie">
            </div>
          </fieldset>
          <fieldset class="amts">
            <legend>Ilości</legend>
            <div v-for="(a, k) in amounts" :key="a[0]" class="amt">
              <label :for="'amt' + k">{{ a[0] }}</label>
              <div class="combo dim"><input :id="'amt' + k" type="text" :value="a[1]"><svg viewBox="0 0 16 16" v-html="icons.arrow" /></div><span>szt</span>
            </div>
          </fieldset>
        </div>
        <div class="reasons">
          <label for="reason">Przyczyna</label>
          <div class="pick first"><input id="reason" type="text" value="wadliwa część"><svg class="ic16" viewBox="0 0 16 16" v-html="icons.lens" /><svg class="ic16" viewBox="0 0 16 16" v-html="icons.x" /></div>
          <label for="flaw">Wada</label>
          <div class="pick"><input id="flaw" type="text" value="Wilgotność"><svg class="ic16" viewBox="0 0 16 16" v-html="icons.lens" /><svg class="ic16" viewBox="0 0 16 16" v-html="icons.x" /></div>
        </div>

        <div class="split">
          <div class="orange">
            <div class="cap"><span>Zgłoszona ilość wadliwa</span></div>
            <p class="made"><svg class="ic14" viewBox="0 0 16 16" v-html="icons.check" /><b>20 szt</b> na co składa się:</p>
            <div class="entry"><label for="toCheck">Ilość do kontroli</label><div class="big yellow"><input id="toCheck" type="text" value="20"><svg viewBox="0 0 16 16" v-html="icons.chev" /></div><span>szt</span></div>
            <p class="and">oraz</p>
            <div class="entry"><label for="lost">Ilość nienaprawialna</label><div class="big red"><input id="lost" type="text" value="0"><svg viewBox="0 0 16 16" v-html="icons.chev" /></div><span>szt</span></div>
          </div>
          <div class="implies">=&gt;</div>
          <div class="greenbox">
            <div class="cap"><svg class="ic14" viewBox="0 0 16 16" v-html="icons.pencil" /><span>Ilości po kontroli jakości ( suma ma równać się zgłoszonej ilości wadliwej 20 szt )</span></div>
            <div v-for="(a, k) in afterCheck" :key="a[0]" class="entry">
              <label :for="'chk' + k">{{ a[0] }}</label>
              <div class="big" :class="a[2]"><input :id="'chk' + k" type="text" :value="a[1]"><svg viewBox="0 0 16 16" v-html="icons.chev" /></div><span>szt</span>
              <button v-if="k === 2" class="carve"><svg class="ic16" viewBox="0 0 16 16" v-html="icons.cut" />Wydziel</button>
            </div>
            <p class="total"><svg class="ic14" viewBox="0 0 16 16" v-html="icons.check" />Suma <em>20 szt</em></p>
          </div>
        </div>

        <div class="subtabs"><button class="on">Korekta zużycia</button><button>Uwagi</button></div>
        <div class="usage">
          <div class="utools"><svg class="ic16" viewBox="0 0 16 16" v-html="icons.edit" /><svg class="ic16" viewBox="0 0 16 17" v-html="icons.layout" /></div>
          <div class="ugrid">
            <table class="grid">
              <colgroup><col class="cind"><col class="c150"><col class="c100"><col class="c100"><col class="c70"><col class="c150"></colgroup>
              <thead><tr><th><svg class="ind" viewBox="0 0 16 16" v-html="icons.star" /></th><th>Asortyment</th><th>Norma zuż...<svg class="sort up" viewBox="0 0 16 16" v-html="icons.arrow" /></th><th>Zużycie faktyc...</th><th>Korekta</th><th>Przyczyna</th></tr></thead>
              <tbody><tr class="filter cream"><td><svg class="ind" viewBox="0 0 16 16" v-html="icons.pin" /></td><td></td><td colspan="4"></td></tr></tbody>
            </table>
            <p>Brak danych</p>
          </div>
          <svg class="ic16" viewBox="0 0 16 16" v-html="icons.list" />
        </div>
        <footer class="actions">
          <button class="confirm"><svg class="ic14" viewBox="0 0 16 16" v-html="icons.ok" />Zatwierdź</button>
          <button class="cancel"><svg class="ic14" viewBox="0 0 16 16" v-html="icons.no" />Anuluj</button>
        </footer>
      </div>
    </section>

    <div v-for="f in frames" :key="f" class="frame" :class="'f-' + f"></div>
    <svg class="arrows" viewBox="0 0 260 540">
      <path d="M203 400 187 423" stroke="#f00" stroke-width="3" />
      <path d="M188 421 C172 444 157 470 160 486 C164 507 190 511 221 519" fill="none" stroke="#f00" stroke-width="4" />
      <path d="m216 527 5-15 21 14z" fill="#f00" />
      <path d="M228 476 225 446" stroke="#f4121b" stroke-width="1.500" />
      <path d="m218 449 6-14 7 13z" fill="#ee2430" />
    </svg>
    <span v-for="n in 8" :key="n" class="badge" :class="'b' + n">{{ n }}</span>
  </div>
</template>

<style>
body { margin: 0; background: #fff; }
</style>

<style scoped>
* { box-sizing: border-box; }
.page { position: relative; min-height: 1158px; overflow: hidden; font: 11px/14px "DejaVu Sans Condensed", "DejaVu Sans", sans-serif; color: #1d2940; }
button, input, select { font: inherit; color: inherit; margin: 0; border-radius: 0; }
button { cursor: pointer; white-space: nowrap; }
input, select { min-width: 0; outline: 0; }
svg { flex: none; display: block; }
p, h1 { margin: 0; font-weight: 400; }
.ic14 { width: 14px; height: 14px; }
.ic15 { width: 15px; height: 15px; }
.ic16 { width: 16px; height: 16px; }
.ic20 { width: 20px; height: 20px; }
.plain { border: 0; background: none; padding: 0; }

.window { display: flex; flex-direction: column; border: 2px solid #1b2538; border-width: 2px 2px 1px 1px; background: #c6d0e0; padding: 0 7px 6px; }
.titlebar { display: flex; align-items: center; height: 28px; margin: 0 -7px; padding: 2px 7px 0 9px; gap: 4px; font: 12px/16px "Noto Sans", sans-serif; color: #10182a; background: linear-gradient(#a3b0cc, #c4cfe0); }
.winbtns { display: flex; gap: 2px; margin-left: auto; }
.winbtn { display: grid; place-items: center; width: 31px; height: 16px; padding: 0; border: 1px solid #56657c; border-radius: 2px; background: linear-gradient(#d8e0eb 50%, #b3bfd0 50%); box-shadow: inset 0 0 0 1px #edf1f6; }
.winbtn.close { border-color: #571a1a; background: linear-gradient(#e3a097 50%, #bd3f2c 50%); box-shadow: inset 0 0 0 1px #e9b0a5; color: #fff; }
.winbtn svg { width: 13px; height: 13px; filter: drop-shadow(0 0 1px #3c3c55); }
.min { width: 10px; height: 4px; border: 1px solid #4b5260; border-radius: 1px; background: #fff; }
.max { width: 10px; height: 8px; border: 1px solid #4b5260; border-radius: 1px; background: #fff; box-shadow: inset 0 0 0 1px #fff, inset 0 0 0 3px #6b7482; }

.menubar { display: flex; height: 19px; background: linear-gradient(#edeff3, #d8dde6); border-bottom: 2px solid #a5abb8; padding-left: 5px; }
.menubar button { display: flex; flex: 0 1 auto; align-items: center; min-width: 0; gap: 1px; padding: 0 0 0 2px; border: 0; border-right: 1px solid #dde1e9; background: none; color: #47536b; }

.workspace { display: flex; background: #bcc7d8; }
.side { display: flex; flex-direction: column; flex: 0 0 184px; margin-right: 9px; }
.search { display: flex; align-items: center; height: 19px; margin-top: 1px; background: #fff; border: 1px solid #a9b3c3; padding-right: 3px; }
.search input { flex: 1; border: 0; padding: 0 1px; background: none; }
.search svg { width: 14px; height: 12px; }
.notice { height: 22px; margin: 3px 1px 0; padding: 0; border: 0; background: #ffff80; font-size: 16px; line-height: 22px; }
.navwrap { display: flex; height: 507px; margin-top: 2px; }
.nav { flex: 1; overflow: hidden; background: #29395a; padding: 12px 12px 0; border-left: 0; }
.ghead { display: flex; align-items: center; width: 100%; height: 25px; margin: 0 0 2px; padding: 0 6px 0 10px; gap: 6px; border: 0; background: linear-gradient(#4c6086, #3c5075); color: #fff; font-weight: 700; text-align: left; }
.gchev { width: 13px; height: 13px; margin-left: auto; color: #dbe2ee; }
.items { padding: 8px 0 9px; margin-top: -2px; background: radial-gradient(circle at 1px 1px, #364769 1px, transparent 1px) 0 0 / 4px 4px; }
.items a { display: flex; align-items: center; height: 28px; padding-left: 13px; gap: 8px; color: #fff; text-decoration: none; white-space: nowrap; }
.vscroll { display: flex; flex-direction: column; align-items: center; flex: 0 0 16px; background: linear-gradient(90deg, #dfe2e8, #eff1f4); color: #7b8494; padding: 2px 0; }
.vscroll svg { width: 11px; height: 14px; margin-top: auto; }
.vscroll svg.up { transform: rotate(180deg); margin: 0 0 1px; }
.vthumb { display: grid; place-items: center; width: 15px; height: 16px; border: 1px solid #9da7b7; border-radius: 1px; background: linear-gradient(90deg, #f2f4f8, #d0d6e2); }
.vthumb.long { height: 377px; }
.vthumb i { width: 7px; height: 8px; background: repeating-linear-gradient(#5c687c 0 1px, transparent 1px 3px); }
.tickrow { display: flex; align-items: center; height: 21px; gap: 2px; }
input[type="checkbox"] { appearance: none; flex: none; display: grid; place-items: center; width: 15px; height: 15px; margin: 0; border: 1px solid #8995a8; background: linear-gradient(135deg, #dfe3ea, #f8f9fb); }
input[type="checkbox"]:checked { background: #fff; }
input[type="checkbox"]:checked::after { content: ""; width: 5px; height: 9px; margin-top: -2px; border: solid #111; border-width: 0 2px 2px 0; transform: rotate(38deg); }
.side .tickrow { padding-left: 2px; }

.main { flex: 1; min-width: 0; display: flex; flex-direction: column; }
.doctabs { display: flex; height: 29px; padding: 1px 3px 0 2px; border-bottom: 1px solid #97a4bb; }
.doctab { height: 27px; padding: 0 8px; border: 1px solid #97a4bb; border-bottom: 0; border-radius: 3px 3px 0 0; background: linear-gradient(#f0f2f6, #cdd4e0); }
.doctab:first-child { width: 164px; }
.doctab.active { display: flex; align-items: center; gap: 13px; width: 163px; height: 28px; padding: 0 8px 0 14px; background: linear-gradient(#fffdf6 40%, #ffe8a8 60%, #ffe3a0); }
.doctab svg { width: 12px; height: 12px; color: #666d79; }
.tabctl { display: flex; gap: 7px; margin-left: auto; color: #8290ab; }
.tabctl svg { width: 13px; height: 13px; }
.pane { flex: 1; display: flex; flex-direction: column; border: 1px solid #97a4bb; border-top: 4px solid #ffe4a3; border-bottom: 4px solid #ffe4a3; border-radius: 0 0 3px 3px; }
.toolbar { display: flex; align-items: center; height: 39px; padding-right: 1px; }
.tool { display: flex; flex-direction: column; align-items: center; justify-content: space-between; width: 36px; height: 34px; padding: 1px 0; border: 0; background: none; font-size: 10px; line-height: 12px; }
.tool svg { width: 17px; height: 17px; }
.vsep { width: 1px; height: 36px; background: #edf0f4; }
.toolbar > input[type="checkbox"] { margin: 0 1px 0 3px; }
.combo { display: flex; align-items: center; background: #fff; border: 1px solid #9aa5b8; }
.combo select, .combo input { flex: 1; width: 100%; appearance: none; border: 0; background: none; padding: 0 0 0 2px; }
.combo svg { width: 13px; height: 13px; margin-right: 3px; }
.all { width: 122px; height: 24px; margin-left: 6px; font-size: 15px; }
.find { flex: 1 1 148px; height: 30px; margin-left: 24px; border: 1px solid #9aa5b8; background: #fff; }
.gearbtn { margin: 0 9px; }
.period { display: flex; flex-direction: column; gap: 2px; font-weight: 700; }
.prow { display: flex; align-items: center; gap: 3px; }
.period .prow:first-child { gap: 8px; padding-left: 1px; }
.period .plain svg { width: 10px; height: 16px; }
.day { width: 104px; height: 17px; }
.date { width: 82px; height: 17px; }
.date svg { margin-right: 1px; }
.view { width: 51px; height: 36px; margin-left: 8px; }

.gridwrap { display: flex; align-items: flex-start; }
.gridcol { flex: 1; min-width: 0; }
.grouping { height: 38px; padding: 0 7px; line-height: 38px; font-size: 12px; color: #9ea7b8; background: #c8d1e3; border-bottom: 1px solid #adb6c5; }
.clip { height: 83px; overflow: hidden; border-bottom: 1px solid #aab4c4; background: #fff; }
.grid { width: 100%; table-layout: fixed; border-spacing: 0; font-size: 12px; line-height: 18px; }
.cind { width: 12px; }
.clip .cind { width: 11px; }
.grid th, .grid td { height: 20px; padding: 0 2px; overflow: hidden; white-space: nowrap; text-align: left; font-weight: 400; }
.grid th { position: relative; height: 22px; color: #4d586e; background: linear-gradient(#eceef3 50%, #dcdfe8 50%, #dfe2ea); border-right: 1px solid #d3d8e2; }
.grid td:first-child { background: #dde1ea; }
.grid th:first-child, .grid td:first-child { padding: 0 1px; }
.grid .num { text-align: right; padding-right: 3px; }
.ind { width: 9px; height: 9px; }
.sort { position: absolute; right: 4px; top: 4px; width: 14px; height: 14px; color: #9aa3b3; }
.sort.up { transform: rotate(180deg); }
.filter td { height: 22px; border-bottom: 2px solid #b9c1cf; background: #ebf6ec; color: #6b716f; text-align: center; }
.sel td { background: #fff5df; }
.alt td { background: #ebf6ec; }
.st, .st2 { display: inline-block; vertical-align: -3px; margin-right: 4px; }
.st { width: 15px; margin-right: 5px; }
.grid td.pcell { padding: 0; }
.prog { position: relative; height: 20px; border: 1px solid #8b9ab4; background: linear-gradient(#dce1eb, #e9ebf0); text-align: center; }
.alt .prog { border-top-color: #dce1eb; }
.prog i { position: absolute; left: 0; top: 0; bottom: 0; background: linear-gradient(#a5e3a6 35%, #13cf27 40%, #0fbd22); }
.prog span { position: relative; }
.sums { display: flex; height: 35px; padding: 3px 13px; background: linear-gradient(#e9ebf0 50%, #dcdfe7 50%); }
.sum { width: 76px; height: 29px; padding-left: 10px; border: 1px solid #cfd5df; border-radius: 2px; background: #fff; font-size: 12px; line-height: 29px; }
.sum.qty { width: 38px; margin-left: 398px; padding-left: 6px; }
.hscroll { display: flex; align-items: center; height: 16px; background: #e6e8eb; color: #7b8494; }
.hscroll svg { width: 11px; height: 11px; }
.hscroll .left { margin: 0 3px 0 2px; transform: rotate(90deg); }
.hscroll .right { margin: 0 3px 0 auto; transform: rotate(-90deg); }
.hthumb { display: grid; place-items: center; width: 204px; height: 15px; border: 1px solid #9da7b7; background: linear-gradient(#f0f2f6, #ccd3df); }
.hthumb i { width: 8px; height: 8px; background: repeating-linear-gradient(90deg, #5c687c 0 2px, transparent 2px 3px); }
.vscroll.short { height: 156px; }
.dots { width: 15px; height: 2px; margin: 3px auto 4px; background: repeating-linear-gradient(90deg, #8492aa 0 3px, transparent 3px 4px); }

.tabrow { display: flex; padding: 0 4px 0 3px; gap: 2px; height: 26px; }
.tabrow button { display: flex; flex: 1 1 0; align-items: center; justify-content: center; gap: 5px; min-width: 0; height: 25px; padding: 0; border: 1px solid #97a4bb; border-bottom: 0; border-radius: 3px 3px 0 0; background: linear-gradient(#f2f3f7, #e0e4eb 50%, #c8cfdc); }
.tabrow .on { background: linear-gradient(#fffdf6 40%, #ffeaae 60%, #ffe3a0); }
.tabrow .focus { outline: 1px dotted #222; outline-offset: -4px; }
.detail { flex: 1; display: flex; flex-direction: column; margin: 0 1px 25px; border: solid #97a4bb; border-width: 0 1px 1px 0; border-top: 4px solid #ffe4a3; box-shadow: 0 4px 0 #ffe4a3; padding: 1px 32px 0 3px; }
.drow { display: flex; flex: 1; margin-top: 2px; margin-right: -32px; }
.dtools { display: flex; flex-direction: column; align-items: center; gap: 14px; width: 29px; padding-top: 4px; }
.qbtn { width: 26px; height: 18px; padding: 0; border: 0; background: none; font: 26px/18px "Liberation Serif", serif; color: #a81c22; text-shadow: 1px 0 #c94a4a; }
.dgrid { flex: 1; min-width: 0; background: #fff; display: flex; flex-direction: column; }
.low { margin-top: auto; height: 52px; border-top: 1px solid #aab4c4; }
.listic { margin: 6px 8px 0; }
.status { display: flex; justify-content: space-between; height: 18px; padding: 0 4px; line-height: 18px; color: #4b566b; background: linear-gradient(#edeff3 50%, #dee1e8 50%); border-top: 1px solid #fff; }

.dialog { position: absolute; left: 242px; top: 479px; right: 31px; border: 1px solid #1b2538; border-top-width: 2px; border-right-width: 2px; border-bottom-width: 2px; background: #c6d0e0; padding: 0 6px 6px 7px; box-shadow: 0 2px 8px #0006; }
.dialog .titlebar { margin: 0 -6px 0 -7px; padding-top: 3px; }
.dialog .titlebar span { font-size: 12px; }
.dbody { background: #bcc7d8; }
h1 { height: 30px; padding: 0 3px; border: 1px solid #97a4bb; background: #eff0f5; font-size: 11px; line-height: 28px; }
.sets { display: flex; gap: 2px; padding: 6px 5px 0; }
fieldset { min-width: 0; margin: 0; padding: 2px 2px 4px 3px; border: 1px solid #97a4bb; border-radius: 2px; height: 85px; }
.prod { flex: 548 1 0; }
.amts { flex: 267 1 0; }
legend { margin-left: 1px; padding: 0 4px; font-weight: 700; line-height: 14px; color: #838ea5; }
.name { display: block; width: 100%; height: 25px; padding: 0 1px; border: 1px solid #97a4bb; background: #b3d9ff; font-size: 16px; color: #000; }
.line { display: flex; align-items: center; gap: 2px; margin-top: 2px; padding-left: 6px; color: #8d97aa; }
.line input { height: 22px; padding: 0 1px; border: 1px solid #97a4bb; background: #dadee7; font-size: 12px; color: #000; }
.serial { width: 105px; margin-right: 8px; }
.stage { flex: 1; }
.amt { display: flex; align-items: center; justify-content: flex-end; gap: 3px; height: 21px; }
.amt label { color: #8d97aa; }
.dim { width: 98px; height: 19px; background: #dadee7; color: #8f99ab; }
.amt:nth-of-type(2) .dim { background: #eff0f2; }
.dim input { text-align: right; color: #000; padding-right: 4px; }
.reasons { display: flex; align-items: center; height: 22px; padding: 0 17px 0 4px; }
.pick { display: flex; align-items: center; flex: 339 1 0; height: 19px; margin-left: 2px; padding-right: 3px; gap: 4px; border: 1px solid #97a4bb; }
.pick.first { flex-grow: 375; margin-right: 10px; }
.pick input { flex: 1; padding: 0; border: 0; background: none; }
.split { display: flex; align-items: flex-start; padding: 3px 43px 0 43px; }
.split > * { min-width: 0; }
.orange { flex: 252 1 0; height: 168px; margin-top: 10px; padding-top: 1px; background: #ffd49a; color: #000; }
.cap { display: flex; align-items: center; justify-content: center; gap: 4px; white-space: nowrap; }
.cap::before, .cap::after { content: ""; flex: 1; height: 1px; background: #dfe0df; }
.made { display: flex; align-items: center; gap: 9px; margin: 9px 0 0 23px; font-size: 14px; line-height: 20px; white-space: nowrap; }
.made b { font-size: 19px; font-weight: 400; }
.entry { display: flex; align-items: center; height: 33px; color: #000; }
.entry label { text-align: right; white-space: nowrap; }
.entry .big { margin: 0 5px; }
.orange .entry { height: 27px; }
.orange .entry label { width: 111px; color: #f00; }
.orange .made + .entry { margin-top: 23px; }
.orange .big { margin-left: 8px; }
.and { height: 35px; line-height: 37px; text-align: center; font-size: 14px; }
.big { display: flex; align-items: center; width: 100px; height: 27px; border: 1px solid #d6dbe4; padding: 1px; background: #fff; font-size: 15px; color: #999; }
.greenbox .big { border-color: #777; }
.big input { flex: 1; width: 60px; height: 23px; border: 0; padding: 0 17px 0 0; text-align: right; color: #000; background: #ff0; }
.big svg { position: relative; width: 13px; height: 13px; margin-left: -15px; margin-right: 2px; }
.big.red input { background: #f00; }
.big.green input { background: #008000; }
.big.green, .greenbox .big.red { color: #563c30; }
.big.green input, .big.red input { color: #111; }
.implies { flex: 43 1 0; padding: 82px 0 0 3px; font-size: 19px; line-height: 24px; }
.greenbox { flex: 445 1 0; height: 174px; margin-top: 6px; background: #bfdbc0; color: #000; }
.greenbox .cap { height: 16px; justify-content: flex-start; gap: 2px; }
.greenbox .cap::before { flex: 0 0 18px; }
.greenbox .cap::after { flex: 1; }
.greenbox .entry label { width: 102px; }
.carve { display: flex; align-items: center; height: 25px; width: 73px; gap: 6px; margin-left: 8px; padding: 0 6px; border: 1px solid #a7a7ab; background: #e0e0e2; }
.total { display: flex; align-items: center; gap: 8px; margin: 5px 14px 0 8px; padding-top: 11px; border-top: 1px solid #6d8570; font-size: 20px; line-height: 28px; }
.total em { font-style: normal; color: #008000; }
.subtabs { display: flex; height: 25px; margin-top: 14px; padding-left: 3px; }
.subtabs button { width: 47px; margin-top: 1px; padding: 0; border: 1px solid #97a4bb; border-bottom: 0; border-radius: 3px 3px 0 0; background: linear-gradient(#f2f3f7, #c8cfdc); }
.subtabs .on { width: 95px; margin-top: 0; background: linear-gradient(#fffdf6 40%, #ffe9aa 70%); }
.usage { display: flex; align-items: flex-start; padding: 10px 19px 11px 0; border: 1px solid #97a4bb; border-top: 5px solid #ffe4a3; border-bottom: 0; box-shadow: 0 4px 0 #ffe4a3; margin-bottom: 6px; }
.utools { display: flex; flex-direction: column; align-items: center; gap: 16px; width: 43px; padding: 5px 0 0 8px; }
.ugrid { flex: 1; height: 200px; margin-right: 8px; background: #fff; }
.ugrid .grid { width: 582px; }
.c150 { width: 150px; }
.c100 { width: 100px; }
.c70 { width: 70px; }
.cream td:last-child { background: #fff5df; }
.ugrid p { margin: 71px 0 0 262px; }
.usage > svg:last-child { margin-top: 6px; }
.actions { display: flex; height: 40px; align-items: center; justify-content: flex-end; gap: 32px; padding: 0 20px; background: #eff0f5; }
.actions button { display: flex; align-items: center; justify-content: center; gap: 5px; height: 34px; }
.confirm { width: 100px; border: 1px solid #97a4bb; border-radius: 2px; background: linear-gradient(#eef0f4 50%, #cdd3df); box-shadow: inset 0 0 0 1px #f3e7c5; }
.cancel { width: 64px; padding: 0; border: 0; background: none; }

.frame { position: absolute; border: 2px solid #fb1010; border-radius: 6px; box-shadow: 1px 2px 5px #0006, inset 1px 2px 5px #0004; pointer-events: none; }
.f-nav { left: 20px; top: 192px; width: 128px; height: 30px; }
.f-row { left: 198px; top: 201px; width: 575px; height: 25px; }
.f-braki { left: 197px; top: 327px; width: 87px; height: 27px; }
.f-quality { left: 202px; top: 382px; width: 37px; height: 27px; }
.f-approve { left: 202px; top: 411px; width: 28px; height: 28px; }
.f-defect { left: 237px; top: 425px; width: 579px; height: 24px; }
.f-control { left: 583px; top: 655px; width: 457px; height: 182px; }
.arrows { position: absolute; left: 0; top: 0; width: 260px; height: 540px; pointer-events: none; filter: drop-shadow(1px 2px 2px #0005); }
.badge { position: absolute; width: 30px; height: 30px; border: 2px solid #f51414; border-radius: 50%; background: #d62027ee; box-shadow: 1px 2px 5px #0007; color: #ffe9e9; font: 16px/26px "Noto Sans", sans-serif; text-align: center; }
.b1 { left: 127px; top: 192px; }
.b2 { left: 185px; top: 196px; }
.b3 { left: 197px; top: 312px; }
.b4 { left: 228px; top: 398px; }
.b5 { left: 969px; top: 688px; }
.b6 { left: 307px; top: 938px; }
.b7 { left: 912px; top: 1082px; }
.b8 { left: 213px; top: 473px; }
</style>
